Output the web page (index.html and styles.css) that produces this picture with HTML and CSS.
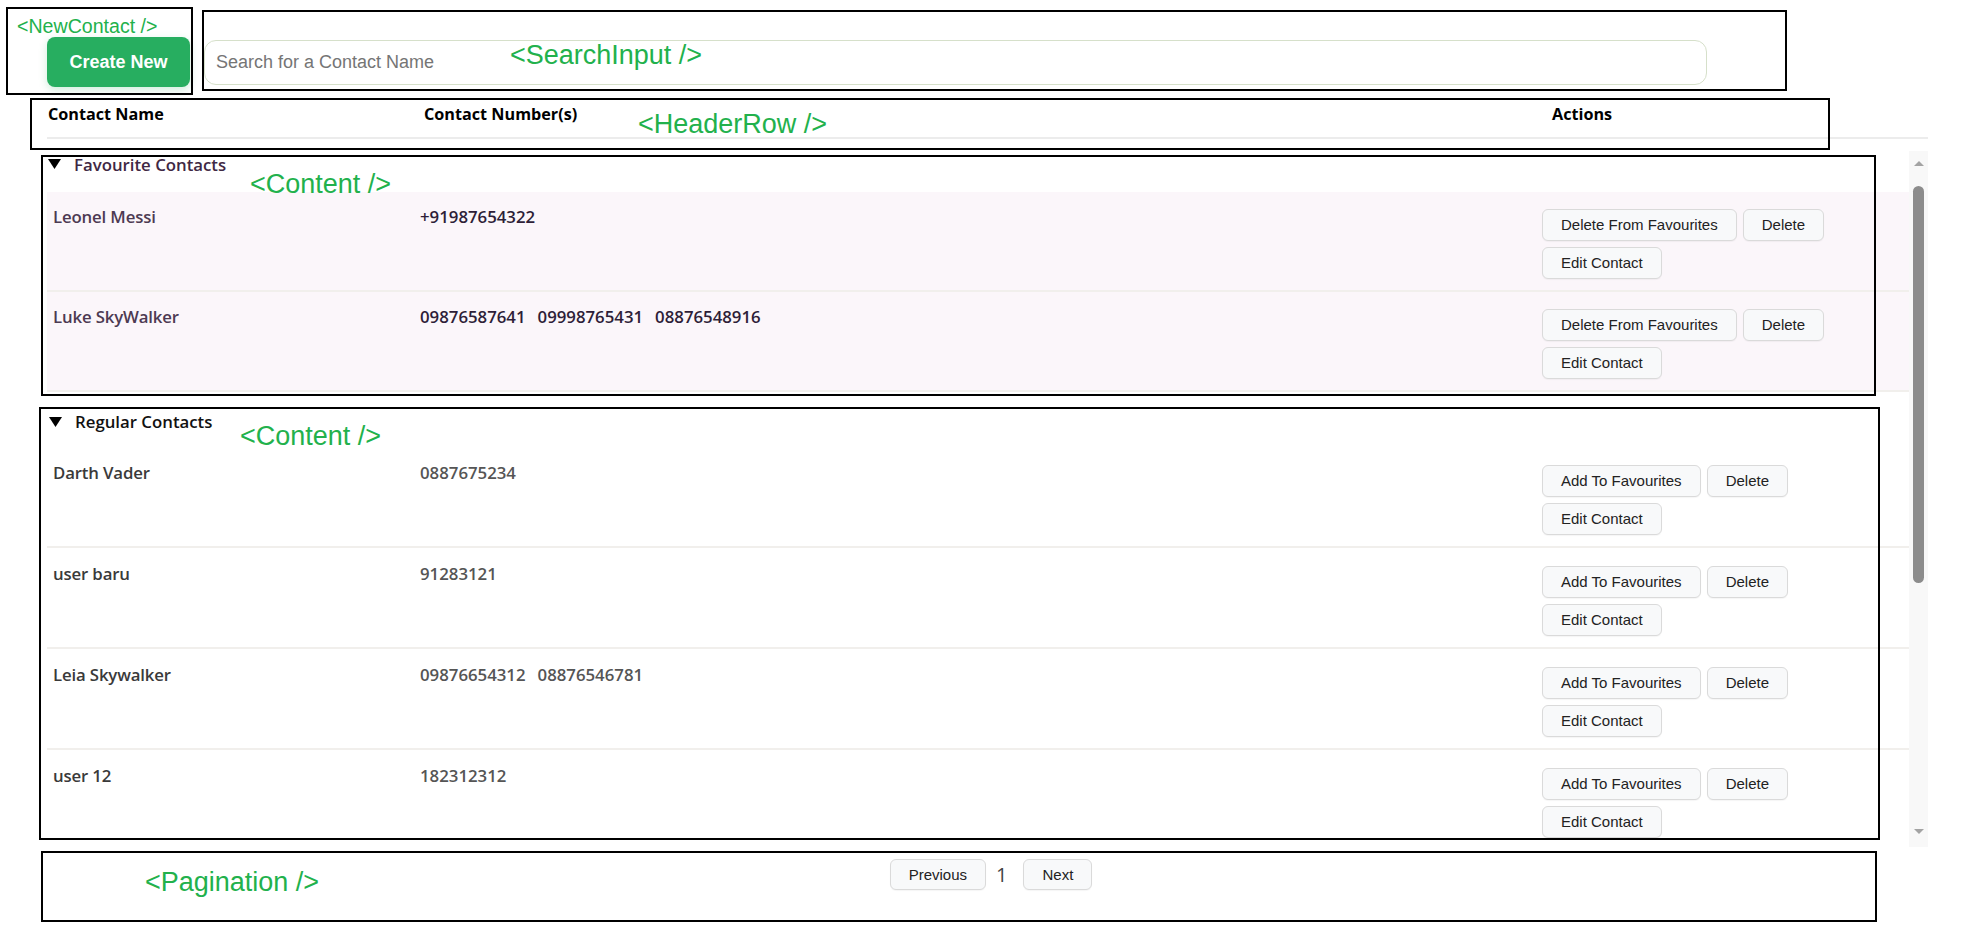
FILE: index.html
```html
<!DOCTYPE html>
<html lang="en">
<head>
<meta charset="utf-8">
<title>Contacts</title>
<link rel="stylesheet" href="styles.css">
</head>
<body>
<div class="page">
  <div class="app">
    <div class="topbar">
      <button class="btn-create">Create New</button>
      <input class="search" type="text" placeholder="Search for a Contact Name">
    </div>

    <div class="header-row">
      <div>Contact Name</div>
      <div>Contact Number(s)</div>
      <div>Actions</div>
    </div>

    <div class="list">
      <div class="list-body">
        <details class="section fav" open>
          <summary><svg class="tri" width="13" height="10" viewBox="0 0 13 10"><path d="M0 0H13L6.5 10Z" fill="#000"/></svg>Favourite Contacts</summary>
          <div class="rows">
            <div class="row">
              <div class="name">Leonel Messi</div>
              <div class="phones"><span>+91987654322</span></div>
              <div class="actions">
                <button class="btn">Delete From Favourites</button>
                <button class="btn">Delete</button>
                <button class="btn">Edit Contact</button>
              </div>
            </div>
            <div class="row">
              <div class="name">Luke SkyWalker</div>
              <div class="phones"><span>09876587641</span><span>09998765431</span><span>08876548916</span></div>
              <div class="actions">
                <button class="btn">Delete From Favourites</button>
                <button class="btn">Delete</button>
                <button class="btn">Edit Contact</button>
              </div>
            </div>
          </div>
        </details>

        <details class="section reg" open>
          <summary><svg class="tri" width="13" height="10" viewBox="0 0 13 10"><path d="M0 0H13L6.5 10Z" fill="#000"/></svg>Regular Contacts</summary>
          <div class="rows">
            <div class="row">
              <div class="name">Darth Vader</div>
              <div class="phones"><span>0887675234</span></div>
              <div class="actions">
                <button class="btn">Add To Favourites</button>
                <button class="btn">Delete</button>
                <button class="btn">Edit Contact</button>
              </div>
            </div>
            <div class="row">
              <div class="name">user baru</div>
              <div class="phones"><span>91283121</span></div>
              <div class="actions">
                <button class="btn">Add To Favourites</button>
                <button class="btn">Delete</button>
                <button class="btn">Edit Contact</button>
              </div>
            </div>
            <div class="row">
              <div class="name">Leia Skywalker</div>
              <div class="phones"><span>09876654312</span><span>08876546781</span></div>
              <div class="actions">
                <button class="btn">Add To Favourites</button>
                <button class="btn">Delete</button>
                <button class="btn">Edit Contact</button>
              </div>
            </div>
            <div class="row">
              <div class="name">user 12</div>
              <div class="phones"><span>182312312</span></div>
              <div class="actions">
                <button class="btn">Add To Favourites</button>
                <button class="btn">Delete</button>
                <button class="btn">Edit Contact</button>
              </div>
            </div>
          </div>
        </details>
      </div>
      <div class="scrollbar">
        <div class="sb-up"></div>
        <div class="sb-thumb"></div>
        <div class="sb-space"></div>
        <div class="sb-down"></div>
      </div>
    </div>

    <div class="pagination">
      <button class="btn">Previous</button>
      <span class="page-num">1</span>
      <button class="btn">Next</button>
    </div>
  </div>

  <div class="annot a-newcontact"></div>
  <div class="annot a-search"></div>
  <div class="annot a-header"></div>
  <div class="annot a-content1"></div>
  <div class="annot a-content2"></div>
  <div class="annot a-pagination"></div>

  <div class="label l-newcontact">&lt;NewContact /&gt;</div>
  <div class="label l-search">&lt;SearchInput /&gt;</div>
  <div class="label l-header">&lt;HeaderRow /&gt;</div>
  <div class="label l-content1">&lt;Content /&gt;</div>
  <div class="label l-content2">&lt;Content /&gt;</div>
  <div class="label l-pagination">&lt;Pagination /&gt;</div>
</div>
</body>
</html>
```

FILE: styles.css
```css
html, body {
  margin: 0;
  padding: 0;
  background: #ffffff;
}

body {
  font-family: "Open Sans", "Noto Sans", sans-serif;
  color: #000;
}

.page {
  position: relative;
  min-height: 944px;
}

.app {
  padding: 37px 44px 0 47px;
}

/* ---------- top bar ---------- */
.topbar {
  display: flex;
  align-items: center;
  gap: 14px;
  height: 50px;
}

.btn-create {
  width: 143px;
  height: 50px;
  border: none;
  border-radius: 8px;
  background: #27ae60;
  color: #fff;
  font: 700 18px "Liberation Sans", Arial, sans-serif;
  box-shadow: 0 3px 9px rgba(39, 174, 96, 0.22);
  cursor: pointer;
  padding: 0;
}

.search {
  width: 1503px;
  height: 45px;
  box-sizing: border-box;
  border: 1px solid #d6e0ca;
  border-radius: 12px;
  padding: 0 11px;
  font: 18px "Liberation Sans", Arial, sans-serif;
  color: #333;
  outline: none;
  background: #fff;
}

.search::placeholder {
  color: #757575;
}

/* ---------- header row ---------- */
.header-row {
  display: grid;
  grid-template-columns: 376px 1128px 1fr;
  padding: 16px 0 11px 1px;
  border-bottom: 2px solid #ececec;
  font-weight: 700;
  font-size: 16.2px;
  line-height: 23px;
  color: #000;
}

/* ---------- list ---------- */
.list {
  display: flex;
  height: 696px;
  margin-top: 12px;
}

.list-body {
  flex: 1;
  min-width: 0;
  overflow: hidden;
}

.section summary {
  display: flex;
  align-items: center;
  gap: 13px;
  list-style: none;
  padding-left: 1px;
  font-size: 16.8px;
  line-height: 23px;
  font-weight: 600;
  cursor: pointer;
}

.section summary::-webkit-details-marker {
  display: none;
}

.tri {
  flex: none;
  display: block;
}

.fav summary {
  margin-top: 1.5px;
  color: #3f2844;
}

.fav .rows {
  margin-top: 16px;
}

.reg summary {
  margin-top: 18.5px;
  padding-left: 2px;
  color: #111;
}

.reg .rows {
  margin-top: 13.5px;
}

.row {
  display: grid;
  grid-template-columns: 367px 1122px 1fr;
  align-items: start;
  padding: 13px 0 11px 6px;
  border-bottom: 2px solid #f1efec;
  font-size: 16.8px;
  line-height: 23px;
  font-weight: 600;
}

.name {
  letter-spacing: -0.15px;
}

.fav .row {
  background: #fbf6fa;
  color: #4d3a52;
}

.fav .phones {
  color: #2e1e38;
}

.reg .row {
  padding-top: 14px;
  color: #3a3a3a;
}

.reg .phones {
  color: #555;
}

.phones {
  display: flex;
  column-gap: 12px;
}

.actions {
  margin-top: 4px;
  display: flex;
  flex-wrap: wrap;
  gap: 6px;
  max-width: 330px;
}

.btn {
  height: 32px;
  padding: 0 18px;
  border: 1px solid #dadada;
  border-radius: 6px;
  background: #f8f9fa;
  font: 15px "Liberation Sans", Arial, sans-serif;
  color: #222;
  box-shadow: 0 1px 1px rgba(0, 0, 0, 0.04);
  cursor: pointer;
}

/* ---------- fake scrollbar ---------- */
.scrollbar {
  width: 19px;
  flex: none;
  background: #f8f8f8;
  display: flex;
  flex-direction: column;
  align-items: center;
}

.sb-up {
  margin-top: 10px;
  width: 0;
  height: 0;
  border-left: 5px solid transparent;
  border-right: 5px solid transparent;
  border-bottom: 5px solid #a3a3a3;
}

.sb-thumb {
  margin-top: 20px;
  width: 11px;
  height: 397px;
  border-radius: 6px;
  background: #8c8c8c;
}

.sb-space {
  flex: 1;
}

.sb-down {
  margin-bottom: 13px;
  width: 0;
  height: 0;
  border-left: 5px solid transparent;
  border-right: 5px solid transparent;
  border-top: 5px solid #a3a3a3;
}

/* ---------- pagination ---------- */
.pagination {
  display: flex;
  justify-content: center;
  align-items: center;
  margin-top: 12px;
  padding-left: 7px;
}

.pagination .btn {
  height: 31px;
}

.page-num {
  margin: 0 16px 0 10px;
  font-size: 20px;
  font-weight: 400;
  color: #444;
  line-height: 1;
}

/* ---------- annotation overlays ---------- */
.annot {
  position: absolute;
  border: 2px solid #000;
  box-sizing: border-box;
  pointer-events: none;
}

.a-newcontact { left: 6px; top: 7px; width: 187px; height: 88px; }
.a-search { left: 202px; top: 10px; width: 1585px; height: 81px; }
.a-header { left: 30px; top: 98px; width: 1800px; height: 52px; }
.a-content1 { left: 41px; top: 155px; width: 1835px; height: 241px; }
.a-content2 { left: 39px; top: 407px; width: 1841px; height: 433px; }
.a-pagination { left: 41px; top: 851px; width: 1836px; height: 71px; }

.label {
  position: absolute;
  color: #22b14c;
  font-family: "Liberation Sans", Arial, sans-serif;
  font-size: 27px;
  line-height: 1;
  white-space: nowrap;
  pointer-events: none;
}

.l-newcontact { left: 17px; top: 17px; font-size: 19.6px; }
.l-search { left: 510px; top: 42px; }
.l-header { left: 638px; top: 111px; }
.l-content1 { left: 250px; top: 171px; }
.l-content2 { left: 240px; top: 423px; }
.l-pagination { left: 145px; top: 869px; }
```
